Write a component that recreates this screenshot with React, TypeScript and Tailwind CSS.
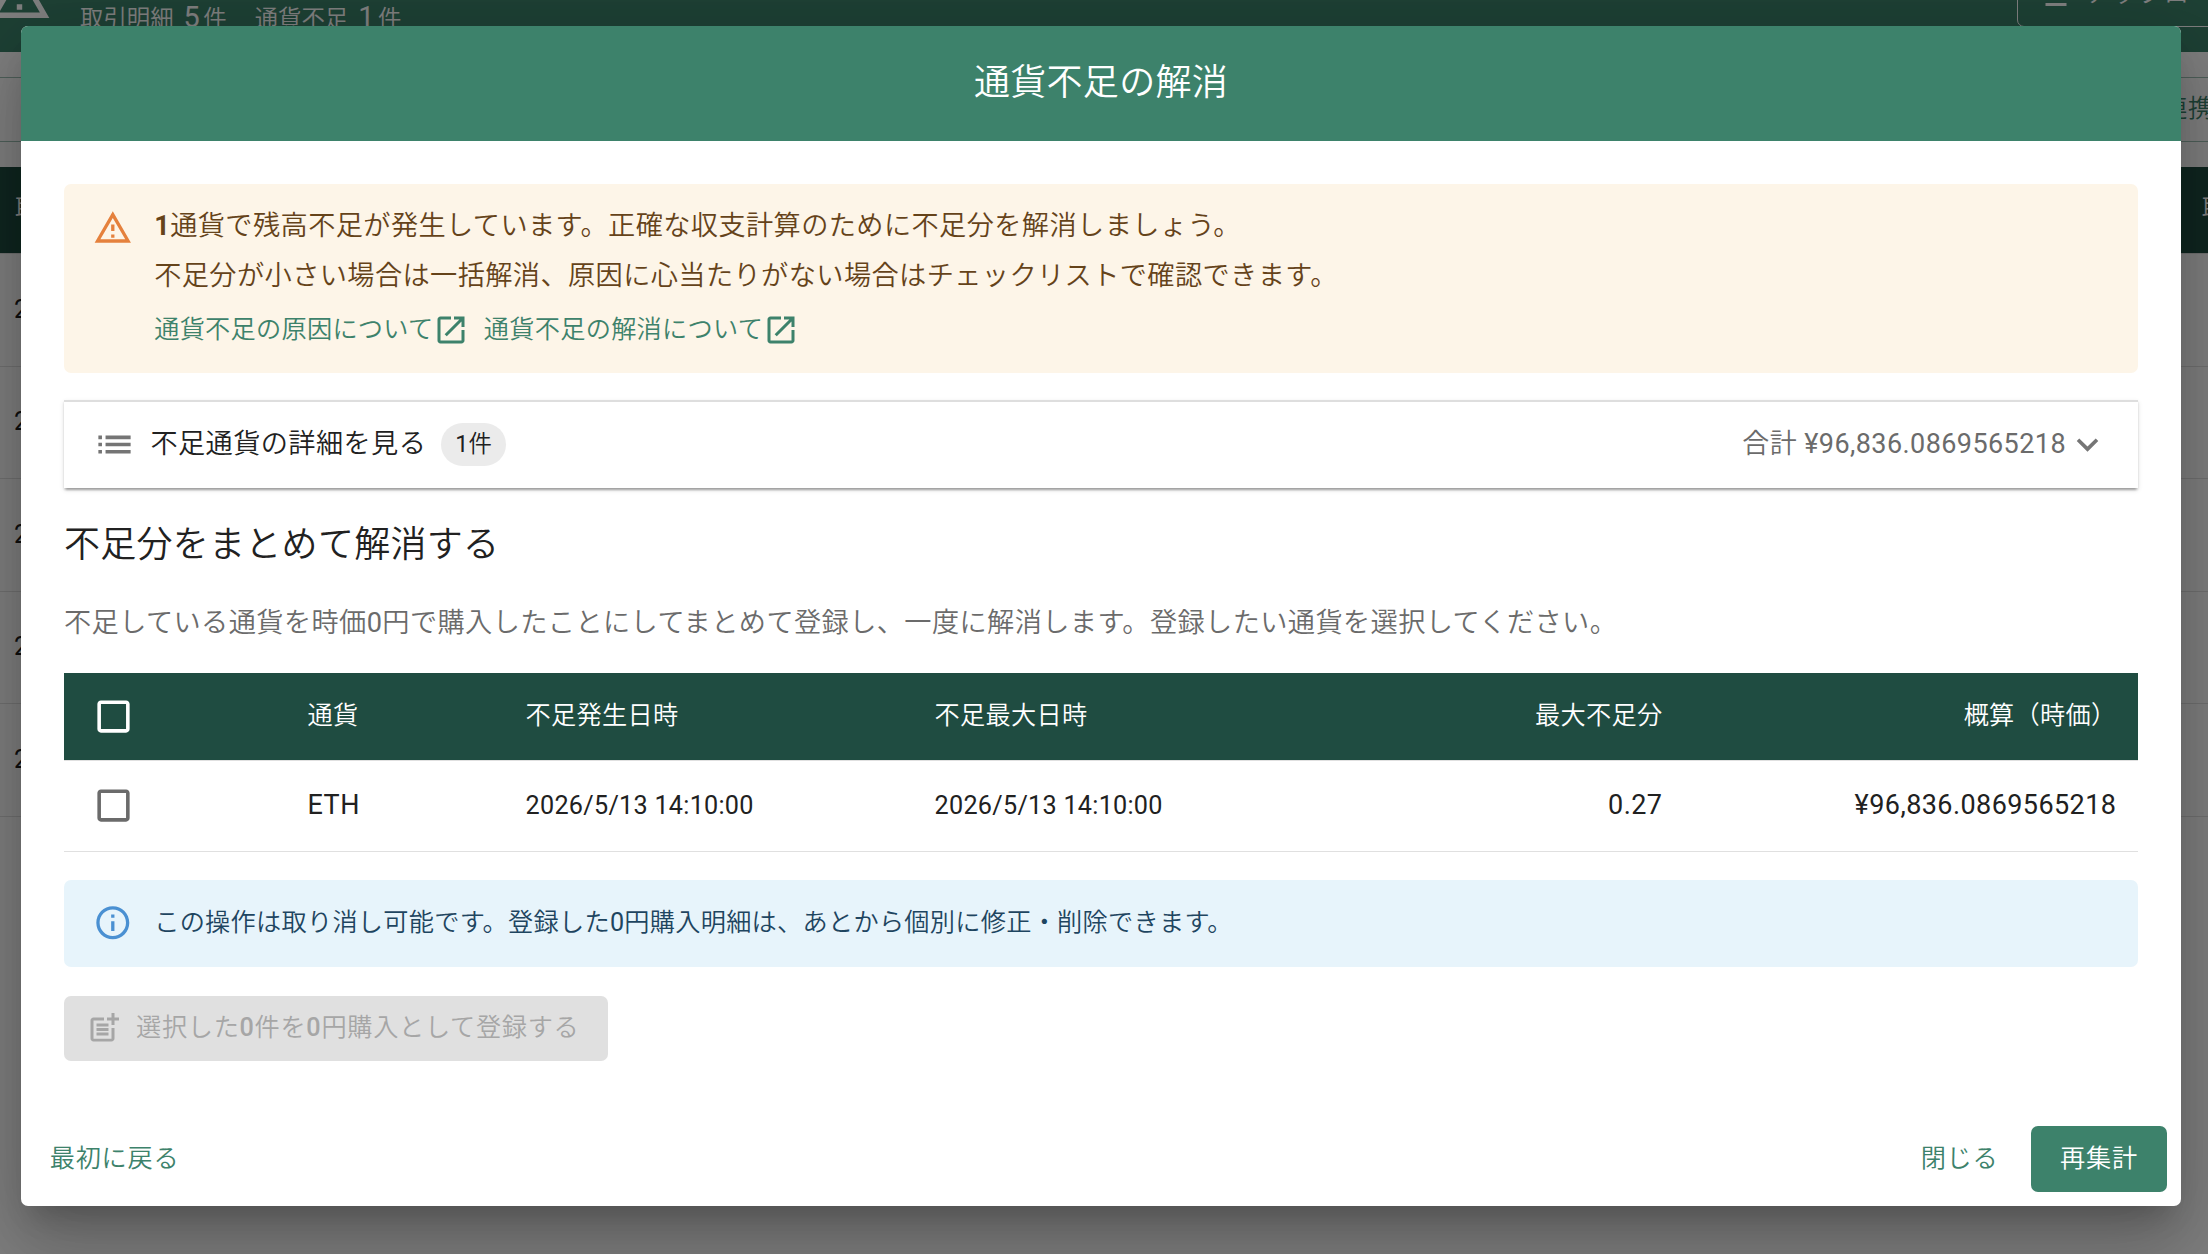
import React from 'react';

interface IconProps {
  d: string;
  className: string;
}

interface Shortage {
  currency: string;
  startedAt: string;
  maxAt: string;
  maxShortage: string;
  estimate: string;
}

const icons = {
  warning: 'M12 5.99L19.53 19H4.47L12 5.99M12 2L1 21h22L12 2zm1 14h-2v2h2v-2zm0-6h-2v4h2v-4z',
  info: 'M11 7h2v2h-2zm0 4h2v6h-2zm1-9C6.48 2 2 6.48 2 12s4.48 10 10 10 10-4.48 10-10S17.52 2 12 2zm0 18c-4.41 0-8-3.59-8-8s3.59-8 8-8 8 3.59 8 8-3.59 8-8 8z',
  openInNew: 'M19 19H5V5h7V3H5c-1.11 0-2 .9-2 2v14c0 1.1.89 2 2 2h14c1.1 0 2-.9 2-2v-7h-2v7zM14 3v2h3.59l-9.83 9.83 1.41 1.41L19 6.41V10h2V3h-7z',
  list: 'M3 13h2v-2H3v2zm0 4h2v-2H3v2zm0-8h2V7H3v2zm4 4h14v-2H7v2zm0 4h14v-2H7v2zM7 7v2h14V7H7z',
  expandMore: 'M16.59 8.59 12 13.17 7.41 8.59 6 10l6 6 6-6z',
  checkbox: 'M19 5v14H5V5h14m0-2H5c-1.1 0-2 .9-2 2v14c0 1.1.9 2 2 2h14c1.1 0 2-.9 2-2V5c0-1.1-.9-2-2-2z',
  postAdd: 'M17 19.22H5V7h7V5H5c-1.1 0-2 .9-2 2v12c0 1.1.9 2 2 2h12c1.1 0 2-.9 2-2v-7h-2v7.22z M19 2h-2v3h-3c.01.01 0 2 0 2h3v2.99c.01.01 2 0 2 0V7h3V5h-3V2zM7 9h8v2H7zM7 12v2h8v-2h-3zM7 15h8v2H7z',
  upload: 'M5 20h14v-2H5v2zm0-10h4v6h6v-6h4l-7-7-7 7z',
};

const shortages: Shortage[] = [
  {
    currency: 'ETH',
    startedAt: '2026/5/13 14:10:00',
    maxAt: '2026/5/13 14:10:00',
    maxShortage: '0.27',
    estimate: '¥96,836.0869565218',
  },
];

function Icon({ d, className }: IconProps) {
  return (
    <svg viewBox="0 0 24 24" fill="currentColor" className={`shrink-0 ${className}`}>
      <path d={d} />
    </svg>
  );
}

function HelpLink({ label }: { label: string }) {
  return (
    <a href="#" className="flex items-center text-[25.2px] tracking-[0.27px] leading-9 text-[#3d826b]">
      {label}
      <Icon d={icons.openInNew} className="w-9 h-9" />
    </a>
  );
}

// Transaction list behind the dialog
function TransactionPage() {
  return (
    <div className="h-full bg-white overflow-hidden whitespace-nowrap">
      <header className="h-[52px] bg-[#3d826b] text-white flex items-start justify-between overflow-hidden">
        <div className="flex">
          <Icon d={icons.warning} className="w-[65px] h-[65px] -ml-[13px] -mt-[39px]" />
          <div className="flex items-baseline ml-7 -mt-[4px] text-[23.4px] leading-[42px]">
            <span>取引明細</span>
            <span className="text-[28.8px] ml-[10px] mr-[3.5px]">5</span>
            <span>件</span>
            <span className="ml-7">通貨不足</span>
            <span className="text-[28.8px] ml-[10px] mr-[3.5px]">1</span>
            <span>件</span>
          </div>
        </div>
        <button className="flex items-center w-[260px] h-[66px] pl-5 -mt-[39px] -mr-[69px] border border-white rounded-[7px] text-[25.2px] tracking-[0.7px]">
          <Icon d={icons.upload} className="w-9 h-9 mr-3" />
          アップロード
        </button>
      </header>
      <div className="mt-[25px] h-[65px] pb-[2px] border-y border-[#9fc0b5] flex items-center justify-end text-[25.2px] tracking-[0.7px] text-[#3d826b]">
        <span className="-mr-1.5">連携</span>
      </div>
      <div className="mt-[25px] h-[87px] px-[15px] pb-[2px] border-b border-[#e0e0e0] bg-[#1f4c41] text-white flex items-center justify-between text-[25.2px]">
        <span>取</span>
        <span className="-mr-[34px]">取</span>
      </div>
      {[1, 2, 3, 4, 5].map(row => (
        <div key={row} className="h-[112.5px] px-[14px] border-b border-[#e0e0e0] flex items-center text-[25.2px] text-[#212121]">
          20
        </div>
      ))}
    </div>
  );
}

function ShortageTable() {
  return (
    <table className="w-full table-fixed border-collapse mt-[25px]">
      <colgroup>
        <col className="w-[222px]" />
        <col className="w-[218px]" />
        <col className="w-[409px]" />
        <col className="w-[409px]" />
        <col className="w-[362px]" />
        <col className="w-[454px]" />
      </colgroup>
      <thead>
        <tr className="h-[87px] bg-[#1f4c41] border-b border-[#e0e0e0] text-white text-[25.2px] tracking-[0.27px] text-left">
          <th className="pl-7"><Icon d={icons.checkbox} className="w-[43px] h-[43px]" /></th>
          <th className="px-[21.6px] font-normal">通貨</th>
          <th className="px-[21.6px] font-normal">不足発生日時</th>
          <th className="px-[21.6px] font-normal">不足最大日時</th>
          <th className="px-[21.6px] font-normal text-right">最大不足分</th>
          <th className="px-[21.6px] font-normal text-right">概算（時価）</th>
        </tr>
      </thead>
      <tbody>
        {shortages.map(item => (
          <tr key={item.currency} className="h-[91px] border-b border-[#e0e0e0] text-[27px] tracking-[0.42px]">
            <td className="pl-7 text-[#6b6b6b]"><Icon d={icons.checkbox} className="w-[43px] h-[43px]" /></td>
            <td className="px-[21.6px]">{item.currency}</td>
            <td className="px-[21.6px] text-[25.2px] tracking-[0.27px]">{item.startedAt}</td>
            <td className="px-[21.6px] text-[25.2px] tracking-[0.27px]">{item.maxAt}</td>
            <td className="px-[21.6px] text-right">{item.maxShortage}</td>
            <td className="px-[21.6px] text-right">{item.estimate}</td>
          </tr>
        ))}
      </tbody>
    </table>
  );
}

export default function App() {
  return (
    <div
      className="relative w-[2208px] h-[1254px] overflow-hidden font-['Roboto','Noto_Sans_CJK_JP_DemiLight','Noto_Sans_CJK_JP',sans-serif] text-[#212121]"
      lang="ja"
    >
      <TransactionPage />
      <div className="absolute inset-0 bg-black/50 pt-[26px] pl-[21px]">
        <div className="w-[2160px] h-[1180px] flex flex-col bg-white rounded-[7px] overflow-hidden shadow-[0_20px_27px_-13px_rgba(0,0,0,0.2),0_43px_68px_5px_rgba(0,0,0,0.14),0_16px_83px_14px_rgba(0,0,0,0.12)]">
          <h2 className="h-[115px] pb-[2px] flex items-center justify-center bg-[#3d826b] text-white text-[36px] tracking-[0.27px]">
            通貨不足の解消
          </h2>

          <div className="flex-1 px-[43px] pt-[43px]">
            <div className="h-[189px] flex pl-[29px] pt-[17px] rounded-[7px] bg-[#fdf5e8] text-[#65431a]">
              <Icon d={icons.warning} className="w-[39.6px] h-[39.6px] mt-[7px] text-[#e5813d]" />
              <div className="ml-[21.6px] text-[27.2px] tracking-[0.4px] leading-[50.4px]">
                <p><b className="font-bold">1</b>通貨で残高不足が発生しています。正確な収支計算のために不足分を解消しましょう。</p>
                <p>不足分が小さい場合は一括解消、原因に心当たりがない場合はチェックリストで確認できます。</p>
                <div className="flex gap-[14.4px] mt-[10px]">
                  <HelpLink label="通貨不足の原因について" />
                  <HelpLink label="通貨不足の解消について" />
                </div>
              </div>
            </div>

            <div className="h-[88px] mt-[27px] px-[29px] pb-px flex items-center border-t-2 border-[#dedede] text-[27.2px] tracking-[0.4px] shadow-[0_4px_2px_-2px_rgba(0,0,0,0.2),0_2px_2px_0_rgba(0,0,0,0.14),0_2px_5px_0_rgba(0,0,0,0.12)]">
              <Icon d={icons.list} className="w-[43px] h-[43px] text-[#757575]" />
              <span className="ml-[14.4px]">不足通貨の詳細を見る</span>
              <span className="ml-[15px] h-[43px] px-[14px] flex items-center rounded-full bg-[#ebebeb] text-[23.4px] tracking-normal">1件</span>
              <span className="ml-auto text-[27px] tracking-[0.42px] text-[#6b6b6b]">合計 ¥96,836.0869565218</span>
              <Icon d={icons.expandMore} className="w-[43px] h-[43px] text-[#757575]" />
            </div>

            <h3 className="mt-[30px] text-[36px] tracking-[0.27px] leading-[54px]">不足分をまとめて解消する</h3>
            <p className="mt-[26px] text-[27.2px] tracking-[0.4px] leading-[50px] text-[#6b6b6b]">
              不足している通貨を時価0円で購入したことにしてまとめて登録し、一度に解消します。登録したい通貨を選択してください。
            </p>

            <ShortageTable />

            <div className="h-[87px] mt-7 pl-[29px] flex items-center rounded-[7px] bg-[#e7f4fb] text-[#1e4560] text-[25.2px] tracking-[0.27px]">
              <Icon d={icons.info} className="w-[39.6px] h-[39.6px] mr-[21.6px] text-[#4a90d2]" />
              この操作は取り消し可能です。登録した0円購入明細は、あとから個別に修正・削除できます。
            </div>

            <button disabled className="h-[65px] w-[544px] mt-[29px] pl-[22px] flex items-center rounded-[7px] bg-[#e0e0e0] text-[#a6a6a6] text-[25.2px] tracking-[0.7px]">
              <Icon d={icons.postAdd} className="w-9 h-9 mr-[14px]" />
              <span>選択した<span className="font-medium">0</span>件を<span className="font-medium">0</span>円購入として登録する</span>
            </button>
          </div>

          <div className="flex items-center p-[14.4px] text-[25.2px] tracking-[0.72px] text-[#3d826b]">
            <button className="pl-[14.4px]">最初に戻る</button>
            <button className="ml-auto px-[14.4px]">閉じる</button>
            <button className="h-[66px] ml-[18.5px] px-[28.8px] rounded-[7px] bg-[#3d826b] text-white">再集計</button>
          </div>
        </div>
      </div>
    </div>
  );
}
